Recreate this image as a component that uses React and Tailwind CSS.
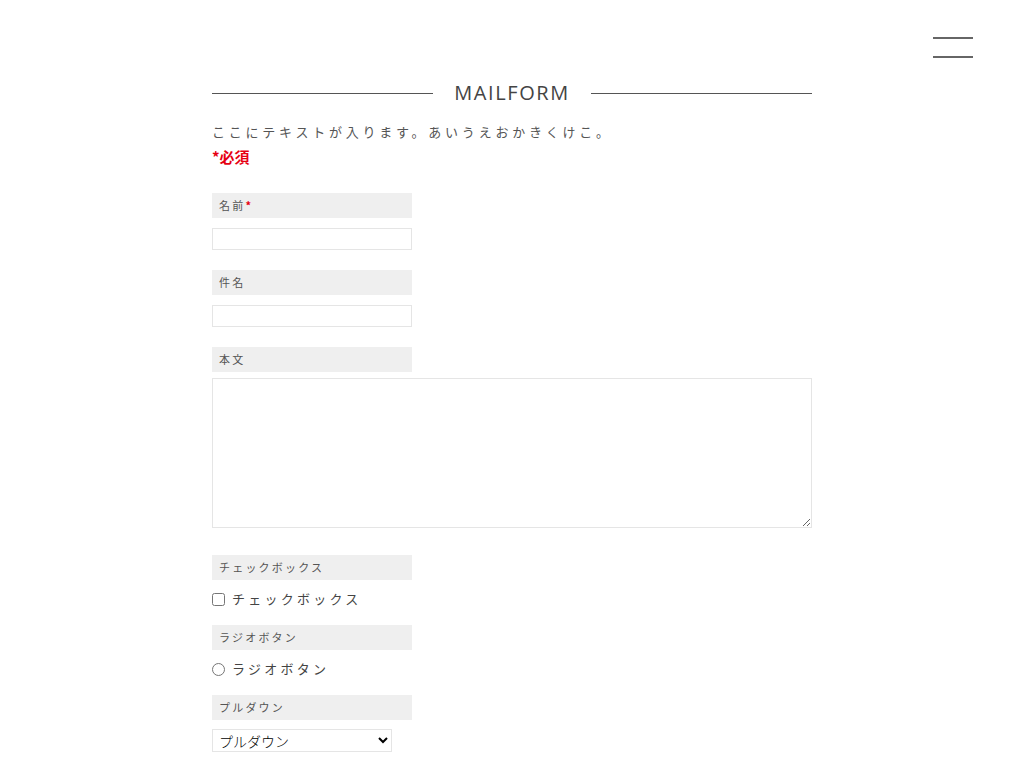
import React from "react"

const jp = { fontFamily: '"Noto Sans CJK JP", "Noto Sans", sans-serif' }

function Label({ children, required }) {
  return (
    <div
      className="w-[200px] h-[25px] bg-[#efefef] flex items-center pl-[7px] text-[11px] tracking-[0.2em] text-[#555]"
      style={jp}
    >
      {children}
      {required && <span className="text-[#e60012] font-bold tracking-normal">*</span>}
    </div>
  )
}

export default function App() {
  return (
    <div className="bg-white min-h-[768px] relative">
      {/* hamburger */}
      <div className="absolute top-[37px] right-[51px] w-[40px] flex flex-col gap-[17px]">
        <span className="block h-[2px] bg-[#666]" />
        <span className="block h-[2px] bg-[#666]" />
      </div>

      <div className="w-[600px] mx-auto pt-[80px]">
        {/* title */}
        <div className="flex items-center h-[26px]">
          <div className="flex-1 h-px bg-[#555]" />
          <h1
            className="px-[21px] text-[20px] tracking-[0.08em] text-[#444] leading-none"
            style={{ fontFamily: '"Open Sans", "Liberation Sans", sans-serif', fontWeight: 400 }}
          >
            MAILFORM
          </h1>
          <div className="flex-1 h-px bg-[#555]" />
        </div>

        <p className="mt-[16px] text-[13px] tracking-[0.29em] text-[#555] leading-[20px]" style={jp}>
          ここにテキストが入ります。あいうえおかきくけこ。
        </p>
        <p className="mt-[5px] text-[15px] font-bold text-[#e60012] leading-[20px]" style={jp}>
          *必須
        </p>

        <div className="mt-[26px] flex flex-col">
          <Label required>名前</Label>
          <input type="text" className="mt-[10px] w-[200px] h-[22px] border border-[#e5e5e5] outline-none" />

          <div className="mt-[20px]">
            <Label>件名</Label>
          </div>
          <input type="text" className="mt-[10px] w-[200px] h-[22px] border border-[#e5e5e5] outline-none" />

          <div className="mt-[20px]">
            <Label>本文</Label>
          </div>
          <textarea className="mt-[6px] w-[600px] h-[150px] border border-[#e5e5e5] outline-none block" />

          <div className="mt-[27px]">
            <Label>チェックボックス</Label>
          </div>
          <label className="mt-[11px] flex items-center h-[16px] text-[13px] tracking-[0.25em] text-[#444]" style={jp}>
            <input type="checkbox" className="m-0 w-[13px] h-[13px] mr-[7px]" />
            チェックボックス
          </label>

          <div className="mt-[18px]">
            <Label>ラジオボタン</Label>
          </div>
          <label className="mt-[11px] flex items-center h-[16px] text-[13px] tracking-[0.25em] text-[#444]" style={jp}>
            <input type="radio" name="r" className="m-0 w-[13px] h-[13px] mr-[7px]" />
            ラジオボタン
          </label>

          <div className="mt-[18px]">
            <Label>プルダウン</Label>
          </div>
          <select
            className="mt-[9px] w-[180px] h-[23px] border border-[#e5e5e5] text-[14px] text-black pl-[2px] bg-white"
            style={{ fontFamily: '"Noto Sans CJK JP", sans-serif', fontWeight: 300 }}
          >
            <option>プルダウン</option>
          </select>
        </div>
      </div>
    </div>
  )
}
